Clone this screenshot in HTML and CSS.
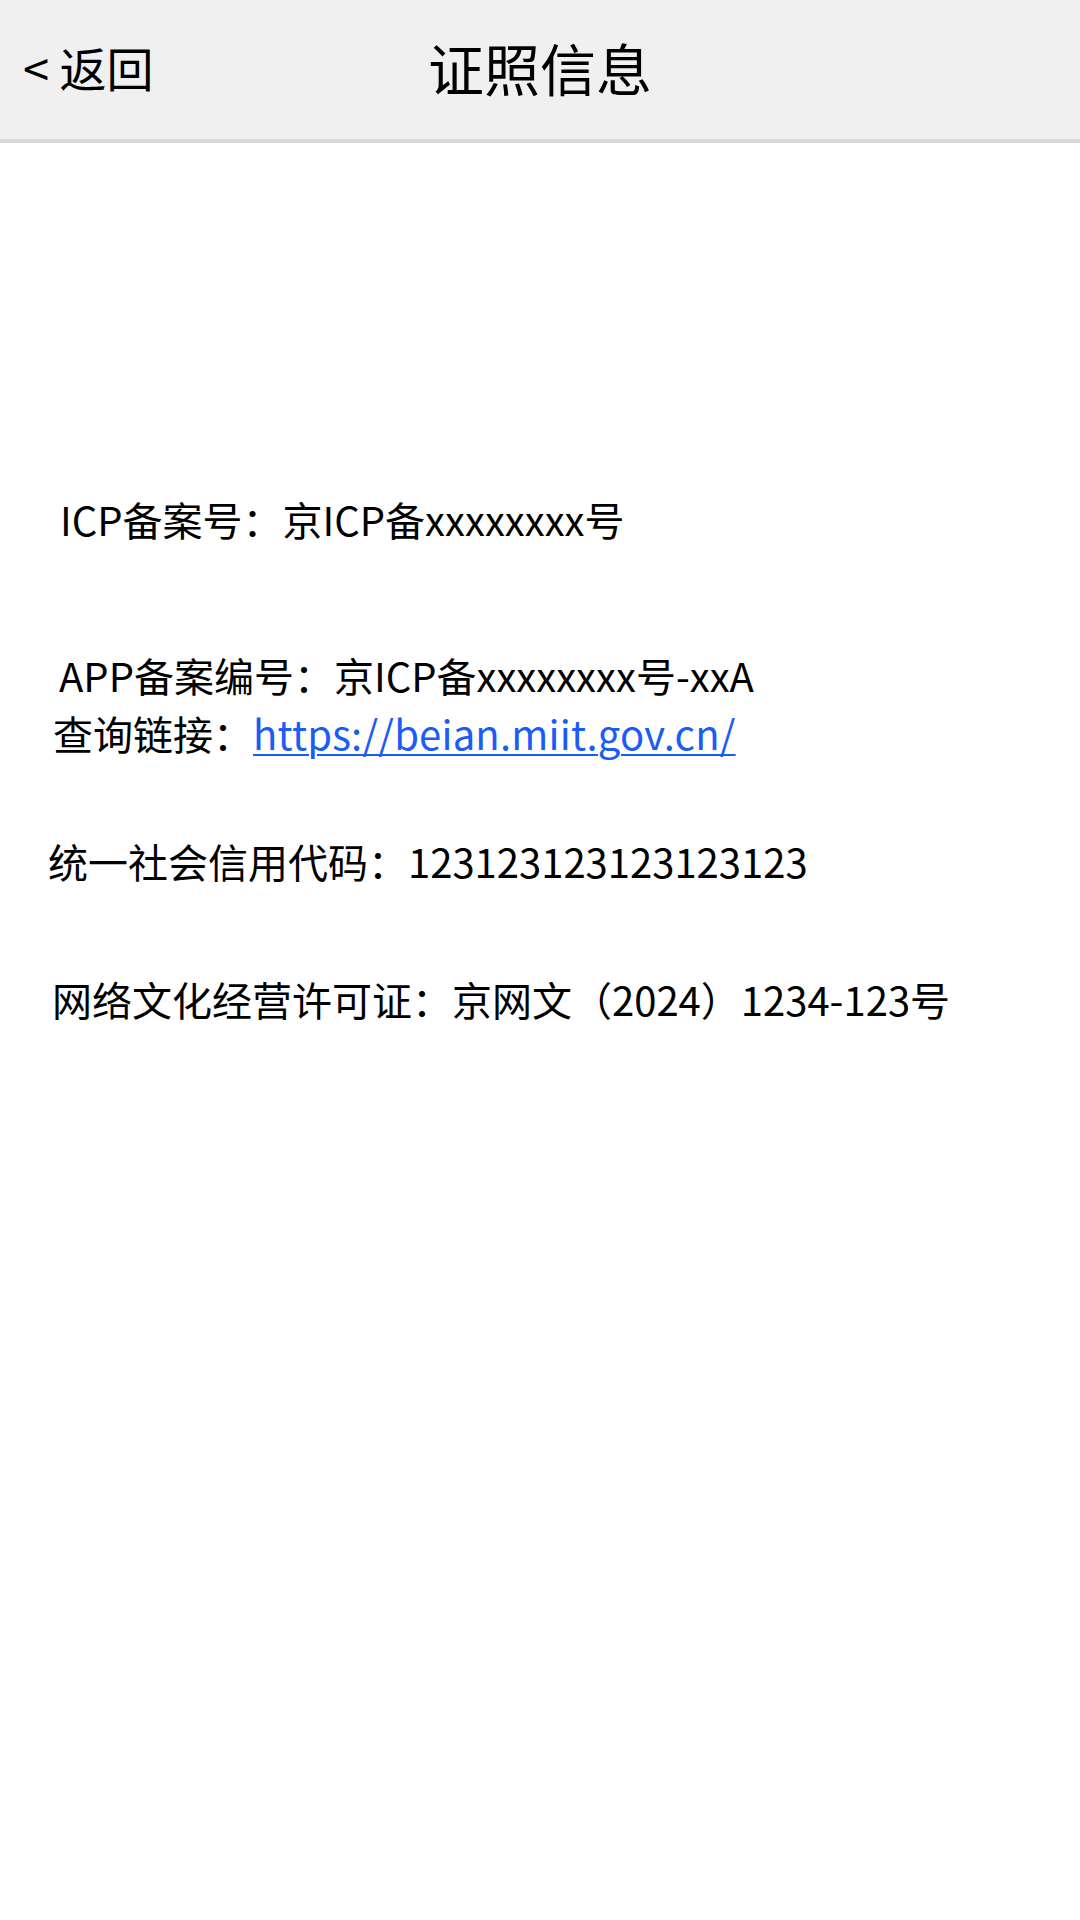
FILE: index.html
```html
<!DOCTYPE html>
<html lang="zh-CN">
<head>
<meta charset="utf-8">
<title>证照信息</title>
<link rel="stylesheet" href="styles.css">
</head>
<body>
<header class="topbar">
  <div class="back">&lt; 返回</div>
  <div class="title">证照信息</div>
  <div class="spacer"></div>
</header>
<main class="content">
  <p class="row row-icp">ICP备案号：京ICP备xxxxxxxx号</p>
  <div class="group">
    <p class="row row-app">APP备案编号：京ICP备xxxxxxxx号-xxA</p>
    <p class="row row-link">查询链接：<a class="link" href="https://beian.miit.gov.cn/">https://beian.miit.gov.cn/</a></p>
  </div>
  <p class="row row-credit">统一社会信用代码：123123123123123123</p>
  <p class="row row-culture">网络文化经营许可证：京网文（2024）1234-123号</p>
</main>
</body>
</html>
```

FILE: styles.css
```css
html, body {
  margin: 0;
  padding: 0;
  background: #ffffff;
}
body {
  width: 1080px;
  min-height: 1920px;
  font-family: "Noto Sans CJK SC", "Noto Sans", sans-serif;
  color: #000;
}
.topbar {
  box-sizing: border-box;
  height: 143px;
  padding-bottom: 6px;
  background: #f0f0f0;
  border-bottom: 4px solid #d8d8d8;
  display: grid;
  grid-template-columns: 1fr auto 1fr;
  align-items: center;
}
.back {
  font-size: 47px;
  padding-left: 23px;
  line-height: 1;
}
.title {
  font-size: 56px;
  line-height: 1;
}
.content {
  display: flex;
  flex-direction: column;
  padding-top: 347px;
}
.row {
  margin: 0;
  font-size: 40px;
  line-height: 58px;
  white-space: nowrap;
}
.group {
  display: flex;
  flex-direction: column;
  margin-top: 98px;
}
.row-icp { padding-left: 60px; }
.row-app { padding-left: 59px; }
.row-link { padding-left: 53px; }
.row-credit { padding-left: 48px; margin-top: 70px; }
.row-culture { padding-left: 52px; margin-top: 80px; }
.link {
  color: #1a5cf8;
  text-decoration: underline;
  text-underline-offset: 4px;
  text-decoration-thickness: 2px;
  letter-spacing: 0.2px;
}
```
